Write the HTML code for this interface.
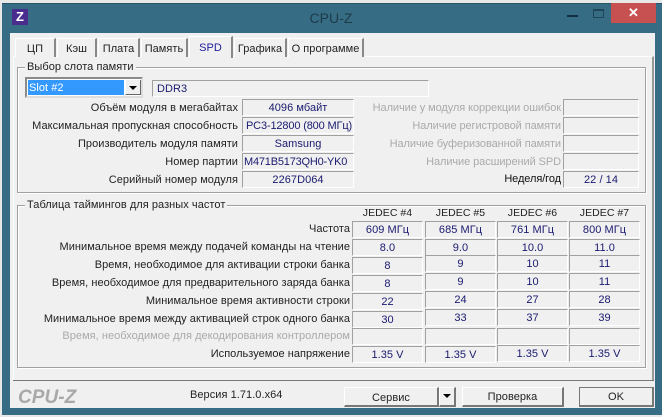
<!DOCTYPE html>
<html><head><meta charset="utf-8"><style>
html,body{margin:0;padding:0}
body{width:662px;height:417px;position:relative;overflow:hidden;background:#e8e8e8;font-family:"Liberation Sans",sans-serif;font-size:11px;letter-spacing:.05px;color:#1a1a1a}
div{position:absolute;box-sizing:border-box}
#win{left:2px;top:3px;width:660px;height:412px;background:#366d84;border-top:1px solid #2a5568}
#client{left:10px;top:33px;width:645px;height:375px;background:#f0f0f0}
.tab{top:38px;height:19px;background:#f0f0f0;border-right:2px solid #888;border-top:1px solid #fff;border-left:1px solid #fff;text-align:center;line-height:20px;color:#222}
#panel{left:13px;top:56px;width:641px;height:325px;border-top:1px solid #fff;border-left:1px solid #fff;border-right:2px solid #999;border-bottom:1px solid #777;background:#f0f0f0}
.grp{left:17px;width:629px;border:1px solid #a0a0a0;box-shadow:inset 1px 1px 0 #fff,1px 1px 0 #fff}
.lg{background:#f0f0f0;left:25px;padding:0 2px;line-height:14px;height:14px;white-space:nowrap;color:#222}
.f{height:17px;border-top:1px solid #a0a0a0;border-left:1px solid #a0a0a0;border-right:1px solid #fff;border-bottom:1px solid #fff;color:#1a1a70;text-align:center;line-height:16px;white-space:nowrap;overflow:hidden}
.w{left:242px;width:112px}.r{left:563px;width:76px}
.c1{left:352px;width:71px}.c2{left:425px;width:71px}.c3{left:497px;width:71px}.c4{left:569px;width:71px}
.l{height:15px;line-height:15px;text-align:right;white-space:nowrap;color:#222}
.l2{right:101px;height:15px;line-height:15px;text-align:right;white-space:nowrap;color:#aaa;letter-spacing:-.08px}
.t{right:312px;height:15px;line-height:15px;text-align:right;white-space:nowrap;color:#222;letter-spacing:.03px}
.j{top:205px;height:15px;line-height:16px;text-align:center;width:71px;color:#222;font-size:10.5px}
.btn{top:387px;height:20px;background:#f0f0f0;border-top:1px solid #fff;border-left:1px solid #fff;border-right:2px solid #777;border-bottom:2px solid #777;text-align:center;line-height:18px;color:#222}
.arr{width:0;height:0;border-left:4px solid transparent;border-right:4px solid transparent;border-top:4px solid #000}
</style></head><body>
<div id="win"></div>
<div style="left:12px;top:9px;width:16px;height:16px;background:#4a2c8f;color:#fff;font-weight:bold;font-size:13px;line-height:16px;text-align:center">Z</div>
<div style="left:270px;top:8px;width:122px;height:20px;line-height:20px;text-align:center;font-size:14px;color:#1d3a48">CPU-Z</div>
<div style="left:567px;top:15px;width:11px;height:2px;background:#12303f"></div>
<div style="left:593px;top:9px;width:11px;height:9px;border:1px solid #1f4558;border-top-width:2px"></div>
<div style="left:611px;top:3px;width:45px;height:20px;background:#c75050;color:#fff;text-align:center;line-height:20px;font-size:13px;font-weight:bold">✕</div>
<div id="client"></div>
<div id="panel"></div>
<div class="tab" style="left:15px;width:41px">ЦП</div>
<div class="tab" style="left:57px;width:40px">Кэш</div>
<div class="tab" style="left:98px;width:42px">Плата</div>
<div class="tab" style="left:141px;width:47px">Память</div>
<div class="tab" style="left:189px;width:44px;top:36px;height:22px;color:#1c1c9a;line-height:23px;z-index:2">SPD</div>
<div class="tab" style="left:234px;width:53px">Графика</div>
<div class="tab" style="left:288px;width:76px">О программе</div>
<div class="grp" style="top:67px;height:126px"></div>
<div class="lg" style="top:60px">Выбор слота памяти</div>
<div class="grp" style="top:205px;height:163px"></div>
<div class="lg" style="top:198px">Таблица таймингов для разных частот</div>

<div style="left:25px;top:77px;width:118px;height:21px;background:#fff;border:2px solid #8a8a8a;border-right-color:#ddd;border-bottom-color:#ddd"></div>
<div style="left:28px;top:80px;width:96px;height:15px;background:#3399ff;color:#fff;line-height:16px;padding-left:1px">Slot #2</div>
<div style="left:125px;top:80px;width:16px;height:15px;background:#f0f0f0;border-left:1px solid #fff;border-right:1px solid #666;border-bottom:1px solid #666"></div>
<div class="arr" style="left:129px;top:86px"></div>
<div class="f" style="left:152px;top:80px;width:277px;text-align:left;padding-left:4px">DDR3</div>

<div class="l" style="top:101px;right:424px">Объём модуля в мегабайтах</div>
<div class="l" style="top:119px;right:424px">Максимальная пропускная способность</div>
<div class="l" style="top:137px;right:424px">Производитель модуля памяти</div>
<div class="l" style="top:155px;right:424px">Номер партии</div>
<div class="l" style="top:173px;right:424px">Серийный номер модуля</div>
<div class="f w" style="top:99px">4096 мбайт</div>
<div class="f w" style="top:117px;text-align:left;padding-left:3px;letter-spacing:-.15px">PC3-12800 (800 МГц)</div>
<div class="f w" style="top:135px">Samsung</div>
<div class="f w" style="top:153px;text-align:left;padding-left:1px;letter-spacing:-.2px">M471B5173QH0-YK0</div>
<div class="f w" style="top:171px">2267D064</div>

<div class="l2" style="top:101px">Наличие у модуля коррекции ошибок</div>
<div class="l2" style="top:119px">Наличие регистровой памяти</div>
<div class="l2" style="top:137px">Наличие буферизованной памяти</div>
<div class="l2" style="top:155px">Наличие расширений SPD</div>
<div class="l2" style="top:172px;color:#111">Неделя/год</div>
<div class="f r" style="top:99px"></div>
<div class="f r" style="top:117px"></div>
<div class="f r" style="top:135px"></div>
<div class="f r" style="top:153px"></div>
<div class="f r" style="top:171px">22 / 14</div>

<div class="j" style="left:352px">JEDEC #4</div>
<div class="j" style="left:425px">JEDEC #5</div>
<div class="j" style="left:497px">JEDEC #6</div>
<div class="j" style="left:569px">JEDEC #7</div>

<div class="t" style="top:222px">Частота</div>
<div class="t" style="top:240px">Минимальное время между подачей команды на чтение</div>
<div class="t" style="top:258px">Время, необходимое для активации строки банка</div>
<div class="t" style="top:276px">Время, необходимое для предварительного заряда банка</div>
<div class="t" style="top:294px">Минимальное время активности строки</div>
<div class="t" style="top:312px">Минимальное время между активацией строк одного банка</div>
<div class="t" style="top:329px;color:#aaa">Время, необходимое для декодирования контроллером</div>
<div class="t" style="top:347px">Используемое напряжение</div>

<div class="f c1" style="top:221px">609 МГц</div><div class="f c2" style="top:221px">685 МГц</div><div class="f c3" style="top:221px">761 МГц</div><div class="f c4" style="top:221px">800 МГц</div>
<div class="f c1" style="top:239px">8.0</div><div class="f c2" style="top:239px">9.0</div><div class="f c3" style="top:239px">10.0</div><div class="f c4" style="top:239px">11.0</div>
<div class="f c1" style="top:257px">8</div><div class="f c2" style="top:255px">9</div><div class="f c3" style="top:255px">10</div><div class="f c4" style="top:255px">11</div>
<div class="f c1" style="top:275px">8</div><div class="f c2" style="top:273px">9</div><div class="f c3" style="top:273px">10</div><div class="f c4" style="top:273px">11</div>
<div class="f c1" style="top:293px">22</div><div class="f c2" style="top:291px">24</div><div class="f c3" style="top:291px">27</div><div class="f c4" style="top:291px">28</div>
<div class="f c1" style="top:311px">30</div><div class="f c2" style="top:309px">33</div><div class="f c3" style="top:309px">37</div><div class="f c4" style="top:309px">39</div>
<div class="f c1" style="top:328px"></div><div class="f c2" style="top:328px"></div><div class="f c3" style="top:328px"></div><div class="f c4" style="top:328px"></div>
<div class="f c1" style="top:346px">1.35 V</div><div class="f c2" style="top:346px">1.35 V</div><div class="f c3" style="top:345px">1.35 V</div><div class="f c4" style="top:345px">1.35 V</div>

<div style="left:13px;top:380px;width:641px;height:1px;background:#777"></div>
<div style="left:18px;top:386px;font-size:19px;line-height:24px;font-weight:bold;font-style:italic;color:#a8a8a8;white-space:nowrap">CPU-Z</div>
<div style="left:190px;top:387px;line-height:16px;white-space:nowrap;color:#222">Версия 1.71.0.x64</div>
<div class="btn" style="left:344px;width:95px;line-height:20px">Сервис</div>
<div class="btn" style="left:439px;width:17px"></div>
<div class="arr" style="left:443px;top:394px"></div>
<div class="btn" style="left:462px;width:102px">Проверка</div>
<div class="btn" style="left:579px;width:75px;border-top:1px solid #777;border-left:1px solid #777">OK</div>
</body></html>
